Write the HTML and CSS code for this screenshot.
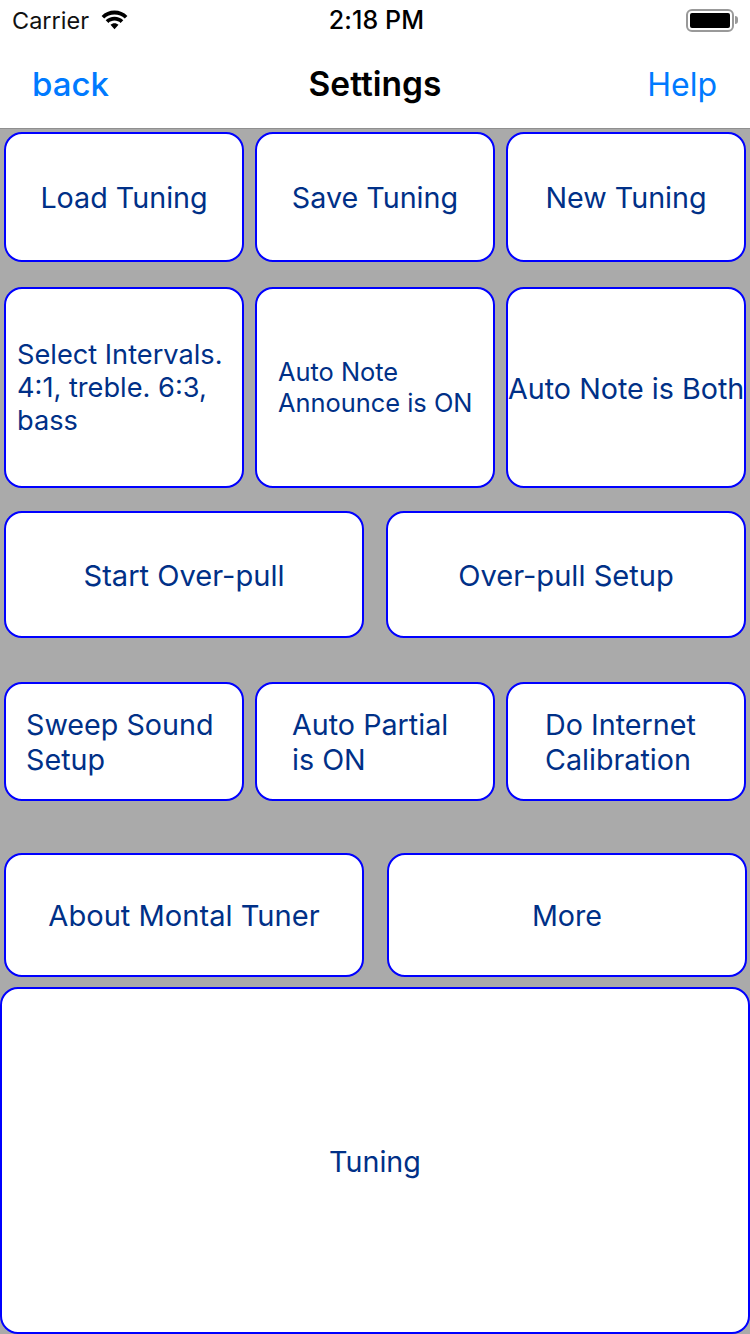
FILE: index.html
```html
<!DOCTYPE html>
<html lang="en">
<head>
<meta charset="utf-8">
<title>Settings</title>
<link rel="stylesheet" href="styles.css">
</head>
<body>
<div class="phone">
  <header class="top">
    <div class="status">
      <div class="status-left">
        <span class="carrier">Carrier</span>
        <svg class="wifi" width="29" height="21" viewBox="0 0 29 21"><path d="M14.5 4.6c4 0 7.600 1.500 10.300 4l2.600-2.700C24 2.600 19.500.6 14.500.6S5 2.600 1.600 5.900l2.600 2.700c2.700-2.500 6.300-4 10.300-4z"/><path d="M14.500 10.600c2.400 0 4.500.9 6.100 2.300l2.700-2.700c-2.300-2.100-5.400-3.400-8.800-3.400s-6.500 1.300-8.800 3.400l2.700 2.700c1.600-1.400 3.700-2.300 6.100-2.300z"/><path d="M14.500 13.300c-1.500 0-2.900.6-4 1.500l4 4.400 4-4.400c-1.100-.9-2.500-1.500-4-1.500z"/></svg>
      </div>
      <span class="time">2:18 PM</span>
      <div class="battery"><span class="battery-body"><span class="battery-fill"></span></span><span class="battery-cap"></span></div>
    </div>
    <nav class="nav">
      <a class="nav-back">back</a>
      <h1 class="nav-title">Settings</h1>
      <a class="nav-help">Help</a>
    </nav>
  </header>
  <main class="board">
    <div class="row row-1">
      <button class="btn">Load Tuning</button>
      <button class="btn">Save Tuning</button>
      <button class="btn">New Tuning</button>
    </div>
    <div class="row row-2">
      <button class="btn left pad-s">Select Intervals.<br>4:1, treble. 6:3,<br>bass</button>
      <button class="btn left small pad-m">Auto Note<br>Announce is ON</button>
      <button class="btn both">Auto Note is Both</button>
    </div>
    <div class="row row-3 two">
      <button class="btn wide nudge">Start Over-pull</button>
      <button class="btn wide nudge">Over-pull Setup</button>
    </div>
    <div class="row row-4">
      <button class="btn left pad-l">Sweep Sound<br>Setup</button>
      <button class="btn left pad-xl">Auto Partial<br>is ON</button>
      <button class="btn left pad-xxl">Do Internet<br>Calibration</button>
    </div>
    <div class="row row-5 two shifted">
      <button class="btn wide">About Montal Tuner</button>
      <button class="btn">More</button>
    </div>
    <button class="btn tuning nudge">Tuning</button>
  </main>
</div>
</body>
</html>
```
FILE: styles.css
```css
* { box-sizing: border-box; }
html, body { margin: 0; padding: 0; }
body { width: 750px; height: 1334px; overflow: hidden; background: #fff; font-family: Inter, "Liberation Sans", sans-serif; }
.phone { width: 750px; height: 1334px; display: flex; flex-direction: column; }
.top { height: 129px; background: #fff; border-bottom: 1px solid #8f8f8f; flex: none; }
.status { height: 40px; display: flex; align-items: center; justify-content: space-between; padding: 0 13px 0 12px; position: relative; color: #000; }
.status-left { display: flex; align-items: center; gap: 11px; }
.carrier { font-size: 23.500px; color: #111; }
.wifi { fill: #000; display: block; }
.time { position: absolute; left: 3px; right: 0; text-align: center; font-size: 25px; font-weight: 500; letter-spacing: 0.1px; }
.battery { display: flex; align-items: center; gap: 1px; margin-right: -1px; }
.battery-body { width: 48px; height: 23px; border: 2px solid #999; border-radius: 6px; padding: 2px; display: block; }
.battery-fill { display: block; width: 100%; height: 100%; background: #000; border-radius: 2px; }
.battery-cap { width: 3px; height: 8px; background: #999; border-radius: 0 3px 3px 0; }
.nav { height: 88px; display: flex; align-items: center; justify-content: space-between; padding: 0 33px 0 32px; position: relative; font-size: 32px; }
.nav-back { color: #007aff; font-weight: 500; font-size: 33px; }
.nav-help { color: #007aff; font-weight: 400; }
.nav-title { position: absolute; left: 0; right: 0; margin: 0; text-align: center; font-size: 33.500px; font-weight: 600; color: #000; }
.board { flex: 1; background: #aaa; display: flex; flex-direction: column; min-height: 0; }
.row { display: grid; grid-template-columns: 240px 240px 240px; column-gap: 11px; padding-left: 4px; }
.row-1 { height: 130px; margin-top: 3px; }
.row-2 { height: 201px; margin-top: 25px; }
.row-3 { height: 127px; margin-top: 23px; }
.row-4 { height: 119px; margin-top: 44px; }
.row-5 { height: 124px; margin-top: 52px; }
.two { grid-template-columns: 360px 360px; column-gap: 22px; }
.shifted { column-gap: 23px; }
.btn { display: block; width: 100%; height: 100%; margin: 0; background: #fff; border: 2px solid #0000ff; border-radius: 18px; color: #003087; font-family: inherit; font-size: 28.700px; line-height: 35px; text-align: center; padding: 0; white-space: nowrap; overflow: hidden; }
.left { text-align: left; }
.wide { font-size: 29.100px; }
.nudge { padding-top: 2px; }
.both { font-size: 28.700px; padding-top: 2px; }
.small { font-size: 25.400px; line-height: 31px; padding-bottom: 2px; }
.pad-s { padding-left: 11px; font-size: 27.200px; line-height: 33px; }
.pad-m { padding-left: 21px; }
.pad-l { padding-left: 20px; }
.pad-xl { padding-left: 35px; }
.pad-xxl { padding-left: 37px; }
.tuning { height: 347px; flex: none; margin-top: 10px; width: 750px; }
```
